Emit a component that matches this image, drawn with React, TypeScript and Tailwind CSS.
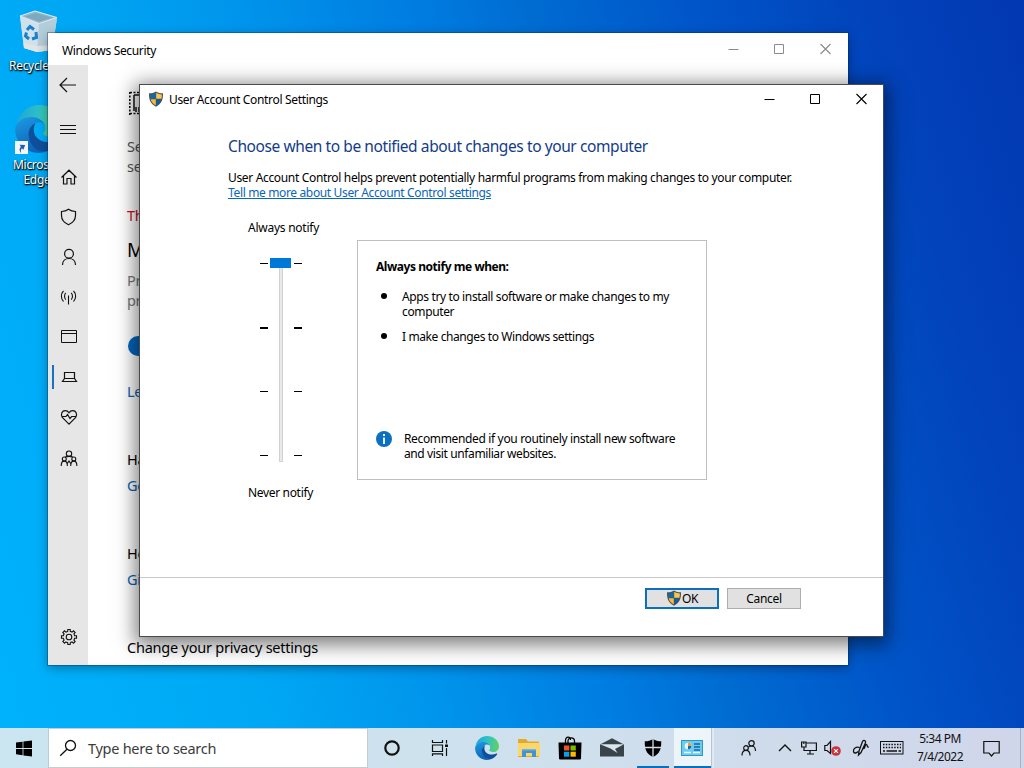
import type { ReactNode } from "react";

function UacShield({ className = "" }: { className?: string }) {
  return (
    <svg viewBox="0 0 16 16" className={className}>
      <path d="M8 .4C6.200 1.700 3.700 2.300 1 2.300C.8 8.500 2.300 13 8 15.700C13.700 13 15.200 8.500 15 2.300C12.300 2.300 9.800 1.700 8 .4Z" fill="#4d5357" />
      <path d="M7.800 1.800C6.200 2.800 4.300 3.300 2.200 3.400C2.100 5 2.200 6.500 2.600 7.800H7.800Z" fill="#1468a8" />
      <path d="M8.200 1.800C9.800 2.800 11.700 3.300 13.800 3.400C13.900 5 13.800 6.500 13.400 7.800H8.200Z" fill="#f9c74e" />
      <path d="M2.700 8.200H7.800V14.300C5 12.900 3.400 10.900 2.700 8.200Z" fill="#f6b93c" />
      <path d="M13.300 8.200H8.200V14.300C11 12.900 12.600 10.900 13.300 8.200Z" fill="#0f5d9c" />
    </svg>
  );
}

function EdgeLogo({ className = "", id }: { className?: string; id: string }) {
  return (
    <svg viewBox="0 0 24 24" className={className}>
      <defs>
        <linearGradient id={id + "a"} x1="0" y1="0.4" x2="1" y2="0.5">
          <stop offset="0" stopColor="#1aa6dd" />
          <stop offset="0.5" stopColor="#2fc3c4" />
          <stop offset="1" stopColor="#62d160" />
        </linearGradient>
        <linearGradient id={id + "b"} x1="0" y1="0" x2="0.4" y2="1">
          <stop offset="0" stopColor="#1c9ce4" />
          <stop offset="1" stopColor="#0c63b8" />
        </linearGradient>
      </defs>
      <path d="M.6 9.600C2 4 6.500 0 12 0C18.500 0 24 4.500 24 10.500C24 14 21.300 16 18.500 16C15.500 16 13.800 14.800 14.200 14C14.800 13.200 15.200 12.400 15.200 11.400C15.200 8.500 12 6.600 8.400 6.600C5 6.600 2 7.800 .6 9.600Z" fill={`url(#${id}a)`} />
      <path d="M.1 12C.3 8.500 4 6 8.400 6C12 6 15.200 8.500 15.200 11.400C15.200 9.600 13.900 8.600 12 8.600C9.200 8.600 7 11.200 7 14.200C7 19.200 11 22.900 15.600 23.300C14.500 23.800 13 24 12 24C5.400 24 0 18.600 .1 12Z" fill={`url(#${id}b)`} />
      <path d="M10.300 9.100C8 10 6.800 12.300 6.800 14.600C6.800 19.500 10.600 23.500 15.600 23.300C18.500 22.300 21 20.300 22.200 18.200C22.500 17.600 22 17.300 21.400 17.600C20 18.300 18.600 18.600 17 18.600C13 18.600 9.600 16.300 9.400 12.700C9.300 11.300 9.700 10.100 10.300 9.100Z" fill="#0e4f9c" />
    </svg>
  );
}

function RecycleBin() {
  return (
    <svg viewBox="0 0 40 44" className="h-11 w-10">
      <path d="M1 6L38 8L33 40L18 42L5 38Z" fill="#c9dfea" />
      <path d="M1 6L20 13L18 42L5 38Z" fill="#cfe2ec" />
      <path d="M20 13L38 8L33 40L18 42Z" fill="#b4cddb" />
      <path d="M1 6L16 1L38 7.500L20 13.500Z" fill="#93b9cc" stroke="#dcebf2" strokeWidth="1" />
      <path d="M6 6.500L17 3L33 7.700L20 11.500Z" fill="#7da8bd" />
      <path d="M4.500 33L18 36L34 35L33 40L18 42L5 38Z" fill="#e6e6e4" opacity="0.800" />
      <g fill="none" stroke="#1b7fcb" strokeWidth="3">
        <path d="M8 20L11 16.500L15 19.500" />
        <path d="M17 22L17.500 27.500L13 29" />
        <path d="M10 29L6.500 26L7.500 22.500" />
      </g>
    </svg>
  );
}

function Line({ children, className = "", size = 20, width = 1.2 }: { children: ReactNode; className?: string; size?: number; width?: number }) {
  return (
    <svg viewBox={`0 0 ${size} ${size}`} width={size} height={size} fill="none" stroke="#111" strokeWidth={width} className={className}>
      {children}
    </svg>
  );
}

const gear = Array.from({ length: 8 }, (_, i) => {
  const p = (r: number, d: number) => {
    const a = ((i * 45 + d - 90) * Math.PI) / 180;
    return `${(10 + r * Math.cos(a)).toFixed(2)} ${(10 + r * Math.sin(a)).toFixed(2)}`;
  };
  return `${i ? "L" : "M"}${p(5.8, -13)}L${p(7.6, -9)}L${p(7.6, 9)}L${p(5.8, 13)}L${p(5.8, 30)}`;
}).join("") + "Z";

const navIcons: ReactNode[] = [
  <Line key="home"><path d="M2.500 10.500L10 3.200L17.500 10.500M4.500 9V17H8V11.500H12V17H15.500V9" /></Line>,
  <Line key="shield"><path d="M9.500 2.300C7.500 3.800 5 4.500 2.500 4.500V8.500C2.500 13 5.200 15.800 9.500 17.700C13.800 15.800 16.500 13 16.500 8.500V4.500C14 4.500 11.500 3.800 9.500 2.300Z" /></Line>,
  <Line key="user"><circle cx="10" cy="6.800" r="4.400" /><path d="M3.500 18C3.500 14 6.300 11.500 10 11.500S16.500 14 16.500 18" /></Line>,
  <Line key="signal" width={1.1}><path d="M9.500 8.500V17.500M4.500 4C1.700 6.500 1.700 12 4.500 14.500M14.500 4C17.300 6.500 17.300 12 14.500 14.500M6.800 5.800C5.100 7.500 5.100 11 6.800 12.700M12.200 5.800C13.900 7.500 13.900 11 12.200 12.700" /></Line>,
  <Line key="window" width={1}><path d="M2.500 3.500H17.500V15.500H2.500ZM2.500 6.500H17.500" /></Line>,
  <Line key="laptop"><path d="M5.500 5.500H15.500V11.500H5.500ZM5.500 11.500L3.500 14.500H17.500L15.500 11.500" /></Line>,
  <Line key="heart"><path d="M10 17.200L3.300 10.500C1.200 7 3.200 3.600 6.200 3.600C8 3.600 9.200 4.500 10 5.800C10.800 4.500 12 3.600 13.800 3.600C16.800 3.600 18.800 7 16.700 10.500ZM3.300 9.500H7L8.500 7.500L11 11.500L12.700 9.500H17" /></Line>,
  <Line key="family" width={1.1} className="mt-1"><circle cx="10" cy="4.700" r="2.700" /><circle cx="5.300" cy="10" r="2" /><circle cx="14.800" cy="10" r="2" /><path d="M6.300 8C7 7.500 8.600 7.400 10 7.400S13 7.500 13.700 8M2.200 17C2.200 13.700 3.400 12.100 5.300 12.100S8.400 13.700 8.400 17M11.700 17C11.700 13.700 12.900 12.100 14.800 12.100S17.900 13.700 17.900 17M8 15L10 12L12 15" /></Line>,
];

function WindowButtons({ color }: { color: string }) {
  return (
    <svg width="104" height="12" viewBox="0 0 104 12" fill="none" stroke={color}>
      <path d="M.5 6.500H10.500M46.500 1.500H55.500V10.500H46.500Z" />
      <path d="M92.500 1L102.500 11M102.500 1L92.500 11" strokeWidth="1.100" />
    </svg>
  );
}

function SecurityWindow() {
  return (
    <section className="absolute top-[33px] left-12 flex h-[632px] w-[800px] flex-col bg-white shadow-[0_0_0_1px_rgba(0,40,90,0.35),0_3px_10px_rgba(0,0,0,0.35)]">
      <header className="flex h-8 shrink-0 items-center justify-between pr-[16px] pl-3.5">
        <span className="pt-[3px] text-[12px] tracking-[-0.34px]">Windows Security</span>
        <WindowButtons color="#8a8a8a" />
      </header>
      <div className="flex flex-1">
        <nav className="flex w-10 flex-col items-center bg-[#e6e6e6] pb-2">
          <div className="flex h-10 items-center"><Line><path d="M2 10H18M9 3L2 10L9 17" /></Line></div>
          <div className="mt-1 flex h-10 items-center"><Line><path d="M2 6.500H18M2 10.500H18M2 14.500H18" /></Line></div>
          <div className="mt-2 flex w-full flex-col">
            {navIcons.map((icon, i) => (
              <div key={i} className={i === 5 ? "relative flex h-10 items-center justify-center pl-0.5" : "flex h-10 items-center justify-center pl-0.5"}>
                {i === 5 && <span className="absolute top-2 left-1 h-6 w-0.5 bg-[#1a6fc9]" />}
                {icon}
              </div>
            ))}
          </div>
          <div className="mt-auto flex h-10 items-center pl-0.5"><Line width={1.1}><path d={gear} /><circle cx="10" cy="10" r="2.800" /></Line></div>
        </nav>
        <main className="flex flex-1 flex-col items-start pt-[26px] pl-[39px] text-[14.5px] leading-5 tracking-[-0.3px] whitespace-nowrap">
          <svg width="24" height="24" viewBox="0 0 24 24" fill="none" stroke="#111" className="ml-0.5">
            <path d="M.8 1V24M1 1.500H11M1 22.500H11" strokeWidth="1.600" strokeDasharray="2 1.500" />
            <path d="M5 4V20M5 4H11M7 16V21M10 16V21" strokeWidth="1.500" />
          </svg>
          <p className="mt-[21px] text-[#555]">Se<br />se</p>
          <p className="mt-[29px] text-[#c50f1f]">Th</p>
          <h2 className="mt-[11px] text-[19px] leading-7 text-black">M</h2>
          <p className="mt-1.5 text-[#777]">Pr<br />pr</p>
          <div className="mt-[26px] ml-px h-5 w-11 rounded-full bg-[#0067c0]" />
          <p className="mt-[25px] text-[#0a64ad]">Le</p>
          <p className="mt-12">Ha</p>
          <p className="mt-1.5 text-[#0a64ad]">Ge</p>
          <p className="mt-12">He</p>
          <p className="mt-1.5 text-[#0a64ad]">Gi</p>
          <p className="mt-12 tracking-[-0.23px]">Change your privacy settings</p>
        </main>
      </div>
    </section>
  );
}

function Ticks() {
  return (
    <div className="mb-0.5 flex h-[194px] w-2 flex-col justify-between pt-px">
      <span className="h-px bg-black" />
      <span className="h-0.5 bg-black" />
      <span className="h-px bg-black" />
      <span className="h-px bg-black" />
    </div>
  );
}

function UacDialog() {
  return (
    <section className="absolute top-[84px] left-[139px] flex h-[553px] w-[745px] flex-col border border-[#4a4a4a] border-r-[#3a4a6a] bg-white text-[12px] leading-[15px] tracking-[-0.345px] whitespace-nowrap shadow-[0_4px_18px_4px_rgba(0,0,0,0.5)]">
      <header className="flex h-7 shrink-0 items-center pr-[15px] pl-2">
        <UacShield className="h-4 w-4" />
        <span className="ml-[5px] pt-px tracking-[-0.33px]">User Account Control Settings</span>
        <span className="ml-auto"><WindowButtons color="#000" /></span>
      </header>
      <div className="flex flex-1 flex-col pt-[21px] pl-[88px]">
        <h1 className="text-[15.5px] leading-6 tracking-[-0.41px] text-[#123c8a]">Choose when to be notified about changes to your computer</h1>
        <p className="mt-3 tracking-[-0.337px]">User Account Control helps prevent potentially harmful programs from making changes to your computer.</p>
        <a className="self-start tracking-[-0.355px] text-[#0a66b8] underline decoration-1 underline-offset-1">Tell me more about User Account Control settings</a>
        <div className="mt-5 flex">
          <div className="ml-5 w-[109px]">
            <div className="tracking-[-0.25px]">Always notify</div>
            <div className="mt-[23px] ml-3 flex h-[204px] items-center">
              <Ticks />
              <div className="ml-0.5 flex h-full w-[21px] flex-col items-center">
                <div className="h-2.5 w-full bg-[#0078d7]" />
                <div className="w-1 flex-1 border border-t-0 border-[#d2d2d2] bg-[#e7eaea]" />
              </div>
              <div className="ml-[3px]"><Ticks /></div>
            </div>
            <div className="mt-[23px] tracking-[-0.33px]">Never notify</div>
          </div>
          <div className="mt-5 flex h-60 w-[350px] flex-col border border-[#bfbfbf] px-[18px] pt-[18px] pb-[18px]">
            <h2 className="font-bold tracking-[-0.45px]">Always notify me when:</h2>
            <ul className="mt-[15px] flex flex-col gap-2.5 pl-[5px]">
              <li className="flex"><span className="mt-1 mr-[15px] h-1.5 w-1.5 rounded-full bg-black" /><span className="tracking-[-0.368px]">Apps try to install software or make changes to my<br />computer</span></li>
              <li className="flex"><span className="mt-1 mr-[15px] h-1.5 w-1.5 rounded-full bg-black" /><span className="tracking-[-0.4px]">I make changes to Windows settings</span></li>
            </ul>
            <div className="mt-auto flex">
              <svg width="16" height="16" viewBox="0 0 16 16" className="mr-3">
                <circle cx="8" cy="8" r="8" fill="#0b6fc2" />
                <path d="M8 3V5M8 6.500V13" stroke="#fff" strokeWidth="1.800" />
              </svg>
              <p className="tracking-[-0.35px]">Recommended if you routinely install new software<br /><span className="tracking-[-0.388px]">and visit unfamiliar websites.</span></p>
            </div>
          </div>
        </div>
      </div>
      <footer className="flex h-[59px] shrink-0 items-start justify-end gap-2 border-t border-[#c8c8c8] pt-2.5 pr-[82px]">
        <button className="flex h-[21px] w-[74px] items-center justify-center border-2 border-[#0a6fbd] bg-[#e1e1e1]"><UacShield className="mb-0.5 h-4 w-4" />OK</button>
        <button className="h-[21px] w-[74px] border border-[#adadad] bg-[#e1e1e1]">Cancel</button>
      </footer>
    </section>
  );
}

function Taskbar() {
  return (
    <footer className="flex h-10 shrink-0 items-stretch bg-[linear-gradient(90deg,#cbe6f1_0%,#cfe0ed_55%,#d0d6ea_100%)]">
      <div className="flex w-[49px] items-center justify-center border-r border-[#b8ccd6]">
        <svg width="16" height="17" viewBox="0 0 16 17" fill="#000"><path d="M0 2.600L6.600 1.700V8H0ZM7.400 1.600L16 .4V8H7.400ZM0 8.900H6.600V15.200L0 14.300ZM7.400 8.900H16V16.600L7.400 15.400Z" /></svg>
      </div>
      <div className="flex w-[319px] items-center border border-l-0 border-[#c6cdd0] bg-white pl-2.5">
        <svg width="18" height="18" viewBox="0 0 18 18" fill="none" stroke="#111" strokeWidth="1.300"><circle cx="11.500" cy="6.500" r="5" /><path d="M8 10.200L1.200 16.800" /></svg>
        <span className="ml-[11px] pt-0.5 text-[14.5px] tracking-[-0.28px] text-[#3c3c3c]">Type here to search</span>
      </div>
      <div className="flex w-12 items-center justify-center"><svg width="16" height="16" viewBox="0 0 16 16"><circle cx="8" cy="8" r="6.700" fill="none" stroke="#111" strokeWidth="2.200" /></svg></div>
      <div className="flex w-12 items-center justify-center">
        <svg width="18" height="16" viewBox="0 0 18 16" fill="none" stroke="#111" strokeWidth="1.200"><path d="M1.500 0V2.500H11.500V0M1.500 5H11.500V11.500H1.500ZM1.500 16V13.800H11.500V16M15.500 0V3.500M15.500 8V16" /><path d="M14 4.500H17V7H14Z" fill="#111" stroke="none" /></svg>
      </div>
      <div className="flex w-[46px] items-center justify-center"><EdgeLogo id="task" className="h-6 w-6" /></div>
      <div className="flex w-[37px] items-center justify-center">
        <svg width="22" height="20" viewBox="0 0 22 20"><path d="M0 1H8L10 3.500H21V19H0Z" fill="#e3a92b" /><path d="M0 5H22V18H0Z" fill="#fbd66b" /><path d="M4 19V11H18V19H14V15H8V19Z" fill="#4194d2" /><path d="M4 11H18V12.500H4Z" fill="#6db5e6" /></svg>
      </div>
      <div className="ml-0.5 flex w-[42px] items-center justify-center">
        <svg width="24" height="24" viewBox="0 0 24 24"><path d="M7.500 7V4.500C7.500 2.500 8.500 1.200 10 1.200S12.500 2.500 12.500 4M10 7V5C10 3 11.500 1.800 13.200 1.800S16.500 3 16.500 5V7" fill="none" stroke="#000" strokeWidth="1.300" /><path d="M.5 6.500H23.500L23 22.500Q23 23.500 22 23.500H2Q1 23.500 1 22.500Z" /><path d="M6 9.500H11.300V14.500H6Z" fill="#f25022" /><path d="M12.500 9.500H17.800V14.500H12.500Z" fill="#7fba00" /><path d="M6 15.700H11.300V20.700H6Z" fill="#00a4ef" /><path d="M12.500 15.700H17.800V20.700H12.500Z" fill="#ffb900" /></svg>
      </div>
      <div className="flex w-[42px] items-center justify-center">
        <svg width="24" height="20" viewBox="0 0 24 20"><path d="M0 6.500L12 .3L24 6.500V18.500H0Z" fill="#39434a" /><path d="M0 6.300H24L15 11L17.500 15L10.500 10.500Z" fill="#d9e6ee" /></svg>
      </div>
      <div className="flex w-[41px] flex-col items-center justify-end">
        <svg width="18" height="18" viewBox="0 0 18 18" className="mr-0.5 mb-[9px]"><path d="M9 0C6.700 1.500 4 2.300 .8 2.300C.5 10 2.200 15 9 18C15.800 15 17.500 10 17.200 2.300C14 2.300 11.300 1.500 9 0Z" /><path d="M9 0V18M0 8.500H18" stroke="#cfe0ed" strokeWidth="1.300" /></svg>
        <span className="mr-px h-0.5 w-8 bg-[#0a6fc0]" />
      </div>
      <div className="flex w-[37px] flex-col items-center justify-end bg-[#eef5fa]">
        <svg width="22" height="16" viewBox="0 0 22 16" className="mr-0.5 mb-2.5"><rect x=".5" y=".5" width="21" height="15" fill="#6ecbf0" stroke="#2c97c9" /><circle cx="7" cy="6" r="3.300" fill="#e8f8ff" /><path d="M7 6V2.700A3.300 3.300 0 0 1 10.300 6Z" fill="#f29a2e" /><path d="M7 6H10.300A3.300 3.300 0 0 1 7 9.300Z" fill="#0f6cb0" /><path d="M13 4H19M13 7H19M13 10H19" stroke="#13679e" strokeWidth="1.400" /><path d="M3 12.500H10M12 12.500H19" stroke="#e8f8ff" strokeWidth="1.500" /></svg>
        <span className="h-0.5 w-full bg-[#0a6fc0]" />
      </div>
      <div className="w-[3px] border-l border-[#b9c4cf] bg-[#dfe9f2]" />
      <div className="ml-auto flex items-center">
        <svg width="16" height="16" viewBox="0 0 16 16" fill="none" stroke="#111" strokeWidth="1.200" className="mr-[21px]"><circle cx="10.500" cy="3.300" r="2.700" /><circle cx="5" cy="8" r="2.300" /><path d="M1 15.500C1 12.500 2.500 10.300 5 10.300S9 12.500 9 15.500M7.500 7C8.200 6.300 9.200 6 10.500 6C12.800 6 14.500 7.500 14.500 11" /></svg>
        <svg width="14" height="8" viewBox="0 0 14 8" fill="none" stroke="#111" strokeWidth="1.400" className="mr-[9px]"><path d="M1 7L7 1L13 7" /></svg>
        <svg width="16" height="14" viewBox="0 0 16 14" fill="none" stroke="#111" strokeWidth="1.200" className="mr-[7px]"><path d="M5 2H15.400V9.500H3V6.500M9 9.500V13M6 13H13M.6 1H5V6H.6ZM2.800 1V3" /></svg>
        <svg width="18" height="16" viewBox="0 0 18 16" fill="none" className="mr-2.5"><path d="M.8 5.500H3L6.500 1.500V13.500L3 10.500H.8Z" stroke="#111" strokeWidth="1.200" /><circle cx="12" cy="11" r="4.800" fill="#cf3038" /><path d="M10.100 9.100L13.900 12.900M13.900 9.100L10.100 12.900" stroke="#fff" strokeWidth="1.200" /></svg>
        <svg width="18" height="18" viewBox="0 0 18 18" fill="none" stroke="#111" strokeWidth="1.300" className="mr-2.5"><path d="M6.500 16L7 12L10.500 2.500Q11.800 .8 13 1.800Q14 2.600 13.300 4.200L9 13.500ZM7.500 8.500C4 7.500 1 9.500 1.500 12.500C2 15 4.500 14 6 12.500M11 9.500C13.500 10.500 12.500 5 14.500 5.500C16 6 14.500 8.500 16.800 8" /></svg>
        <svg width="24" height="14" viewBox="0 0 24 14" fill="none" stroke="#111" className="mr-3"><rect x=".5" y=".5" width="22.500" height="12.500" /><path d="M3 3.500H21M3 6.500H21" strokeDasharray="1.500 1.300" strokeWidth="1.300" /><path d="M3 10H5M6.500 10H17M18.500 10H21" strokeWidth="1.300" /></svg>
        <div className="mr-[19px] mb-px w-12 text-center text-[12px] leading-[18px] tracking-[-0.5px] whitespace-nowrap text-[#111]">5:34 PM<br />7/4/2022</div>
        <svg width="17" height="17" viewBox="0 0 17 17" fill="none" stroke="#111" strokeWidth="1.200" className="mr-5"><path d="M.8 1.500H16.200V13H11L8.500 16L6 13H.8Z" /></svg>
      </div>
      <div className="w-1 border-l border-[#a9b2c4]" />
    </footer>
  );
}

export default function App() {
  return (
    <div className="relative flex h-[768px] w-[1024px] flex-col overflow-hidden bg-[linear-gradient(74deg,#00b2fc_0%,#00a8f4_22%,#0094ec_37%,#007ce0_51%,#006cd2_60%,#0054c8_74%,#0242ba_88%,#0238b2_100%)] font-['Noto_Sans',sans-serif] text-black">
      <div className="flex-1 pt-2.5 text-[12px] leading-[15px] tracking-[-0.3px] text-white [text-shadow:0_1px_2px_#000,1px_1px_1px_#000]">
        <div className="flex w-[78px] flex-col items-center"><RecycleBin /><span className="mt-1 w-[60px]">Recycle</span></div>
        <div className="relative mt-8 flex w-[78px] flex-col items-center text-center">
          <EdgeLogo id="desk" className="h-12 w-12" />
          <svg width="13" height="13" viewBox="0 0 13 13" className="absolute top-[36px] left-[15px]"><rect width="13" height="13" fill="#f4f7fa" /><path d="M3 11C2.500 8 4 5.800 6.500 5.500V3L11 6.500L6.500 9.500V7.500C5 7.700 3.800 8.500 3 11Z" transform="rotate(-35 6.500 6.500)" fill="#1c5fae" /></svg>
          <span className="mt-1 w-[52px] text-left">Micros</span>
          <span className="pr-1">Edge</span>
        </div>
      </div>
      <SecurityWindow />
      <UacDialog />
      <Taskbar />
    </div>
  );
}
